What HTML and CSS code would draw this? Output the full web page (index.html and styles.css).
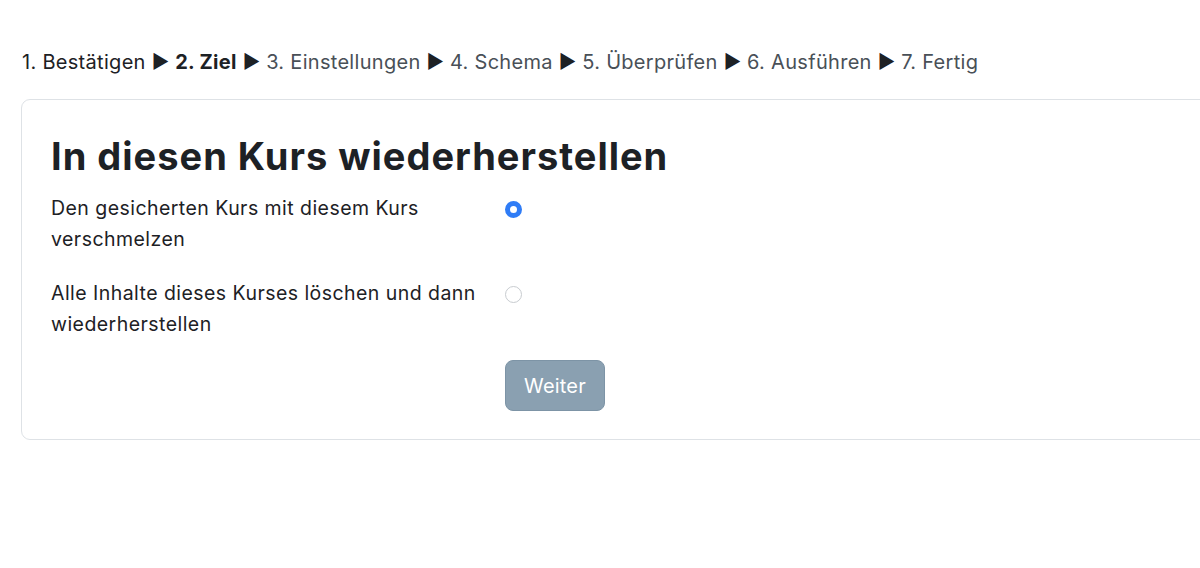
FILE: index.html
```html
<!DOCTYPE html>
<html lang="de">
<head>
    <meta charset="UTF-8">
    <meta name="viewport" content="width=device-width, initial-scale=1.0">
    <title>Wiederherstellen - Ziel</title>
    <link rel="stylesheet" href="styles.css">
</head>
<body>
    <div class="page">
        <div class="steps">
            <span class="step done">1. Bestätigen</span>
            <span class="arrow">&#9654;</span>
            <span class="step current">2. Ziel</span>
            <span class="arrow">&#9654;</span>
            <span class="step">3. Einstellungen</span>
            <span class="arrow">&#9654;</span>
            <span class="step">4. Schema</span>
            <span class="arrow">&#9654;</span>
            <span class="step">5. Überprüfen</span>
            <span class="arrow">&#9654;</span>
            <span class="step">6. Ausführen</span>
            <span class="arrow">&#9654;</span>
            <span class="step">7. Fertig</span>
        </div>

        <form class="restore-card">
            <h2>In diesen Kurs wiederherstellen</h2>

            <div class="form-row">
                <label for="merge">Den gesicherten Kurs mit diesem Kurs verschmelzen</label>
                <div class="control">
                    <input type="radio" name="target" id="merge" checked>
                </div>
            </div>

            <div class="form-row">
                <label for="replace">Alle Inhalte dieses Kurses löschen und dann wiederherstellen</label>
                <div class="control">
                    <input type="radio" name="target" id="replace">
                </div>
            </div>

            <div class="form-row buttons">
                <div class="label-space"></div>
                <div class="control">
                    <button type="submit" class="button" disabled>Weiter</button>
                </div>
            </div>
        </form>
    </div>
</body>
</html>
```

FILE: styles.css
```css
:root {
    --text: #1d2125;
    --muted: #495057;
    --primary: #2f7cf6;
    --border: #dee2e6;
}

* {
    box-sizing: border-box;
    margin: 0;
    padding: 0;
}

body {
    font-family: Inter, "Noto Sans", sans-serif;
    color: var(--text);
    background: #fff;
    overflow: hidden;
}

.page {
    padding: 47px 0 0 21px;
    width: 1260px;
}

.steps {
    font-size: 20px;
    letter-spacing: 0.3px;
    line-height: 30px;
    display: flex;
    gap: 6px;
    align-items: center;
    padding-left: 1px;
    color: var(--muted);
}

.step.done {
    color: var(--text);
}

.step.current {
    color: var(--text);
    font-weight: 700;
}

.arrow {
    color: var(--text);
    font-size: 19px;
    letter-spacing: 0;
}

.restore-card {
    margin-top: 22px;
    border: 1px solid var(--border);
    border-radius: 9px;
    padding: 30px 29px 28px;
}

.restore-card h2 {
    font-size: 38px;
    font-weight: 700;
    line-height: 52px;
    letter-spacing: 1px;
    margin-bottom: 11px;
}

.form-row {
    display: flex;
    margin-bottom: 23px;
}

.form-row.buttons {
    margin-top: -3px;
    margin-bottom: 0;
}

.form-row label,
.label-space {
    width: 454px;
    font-size: 19.5px;
    letter-spacing: 0.45px;
    line-height: 31px;
    flex-shrink: 0;
}

.control {
    display: flex;
    align-items: flex-start;
}

input[type="radio"] {
    appearance: none;
    width: 17px;
    height: 17px;
    margin-top: 8px;
    border: 1px solid #c8ccd0;
    border-radius: 50%;
    background: #fff;
}

input[type="radio"]:checked {
    border: 5px solid var(--primary);
}

.button {
    font-family: inherit;
    font-size: 20px;
    letter-spacing: 0.2px;
    height: 51px;
    width: 100px;
    color: #fff;
    background: #8aa0b1;
    border: 1px solid #7d94a6;
    border-radius: 8px;
}
```
